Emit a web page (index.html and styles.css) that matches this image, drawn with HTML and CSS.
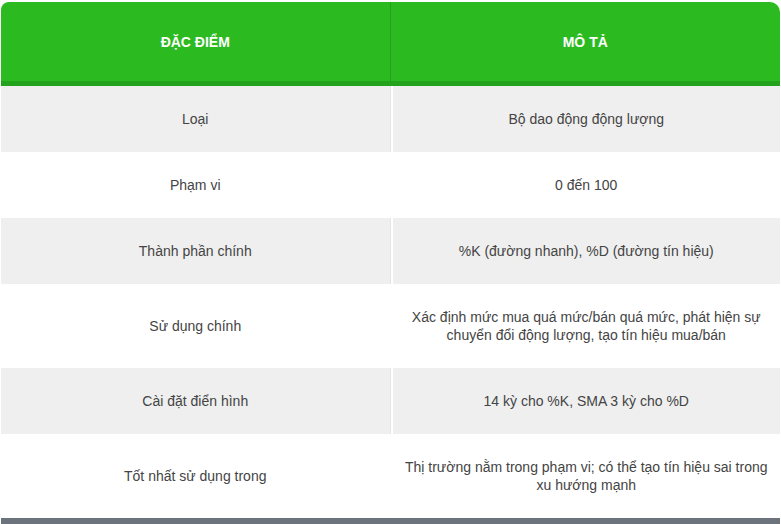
FILE: index.html
```html
<!DOCTYPE html>
<html lang="vi">
<head>
<meta charset="utf-8">
<link rel="stylesheet" href="styles.css">
</head>
<body>
<div class="wrap">
  <table class="spec">
    <thead>
      <tr>
        <th class="col-a">ĐẶC ĐIỂM</th>
        <th class="col-b">MÔ TẢ</th>
      </tr>
    </thead>
    <tbody>
      <tr class="odd"><td class="col-a">Loại</td><td class="col-b">Bộ dao động động lượng</td></tr>
      <tr><td class="col-a">Phạm vi</td><td class="col-b">0 đến 100</td></tr>
      <tr class="odd"><td class="col-a">Thành phần chính</td><td class="col-b">%K (đường nhanh), %D (đường tín hiệu)</td></tr>
      <tr><td class="col-a">Sử dụng chính</td><td class="col-b">Xác định mức mua quá mức/bán quá mức, phát hiện sự chuyển đổi động lượng, tạo tín hiệu mua/bán</td></tr>
      <tr class="odd"><td class="col-a">Cài đặt điển hình</td><td class="col-b">14 kỳ cho %K, SMA 3 kỳ cho %D</td></tr>
      <tr><td class="col-a">Tốt nhất sử dụng trong</td><td class="col-b">Thị trường nằm trong phạm vi; có thể tạo tín hiệu sai trong xu hướng mạnh</td></tr>
    </tbody>
  </table>
  <div class="footer-bar"></div>
</div>
</body>
</html>
```
FILE: styles.css
```css
html, body {
  margin: 0;
  padding: 0;
  background: #ffffff;
}
.wrap {
  padding: 2px 1px 0 1px;
  font-family: "Liberation Sans", Arial, sans-serif;
}
.spec {
  width: 100%;
  border-collapse: separate;
  border-spacing: 0;
  table-layout: fixed;
}
.spec th {
  background: #2bbb21;
  color: #ffffff;
  font-size: 14px;
  font-weight: bold;
  height: 79px;
  padding: 0 12px;
  text-align: center;
  vertical-align: middle;
  border-bottom: 5px solid #23a21c;
  line-height: 18px;
}
.spec th.col-a {
  border-top-left-radius: 8px;
  border-right: 1px solid #23a01c;
}
.spec th.col-b {
  border-top-right-radius: 10px;
}
.spec td {
  font-size: 14px;
  color: #444444;
  line-height: 18px;
  padding: 24px 12px;
  text-align: center;
  vertical-align: middle;
}
.spec td.col-a {
  border-right: 1px solid #ffffff;
}
.spec tr.odd td.col-a {
  border-right-color: #e4e4e4;
}
.spec td.col-b {
  border-left: 2px solid #ffffff;
}
.spec tr.odd td {
  background: #efefef;
}
.footer-bar {
  height: 8px;
  background: #6c737d;
}
```
